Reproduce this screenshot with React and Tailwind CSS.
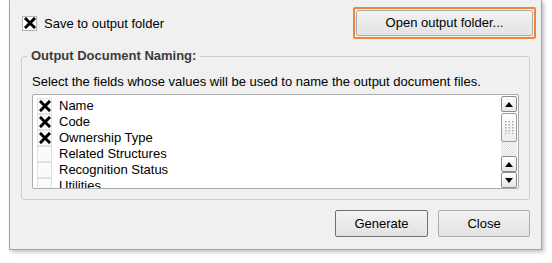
import React from "react";

const fields = [
  { name: "Name", checked: true },
  { name: "Code", checked: true },
  { name: "Ownership Type", checked: true },
  { name: "Related Structures", checked: false },
  { name: "Recognition Status", checked: false },
  { name: "Utilities", checked: false },
];

const Cross = ({ size = 12 }) => (
  <svg width={size} height={size} viewBox="0 0 12 12">
    <path d="M2 2 L10 10 M10 2 L2 10" stroke="#000" strokeWidth="3" strokeLinecap="square" />
  </svg>
);

const Arrow = ({ down }) => (
  <svg width="8" height="5" viewBox="0 0 8 5">
    <path d={down ? "M0 0 H8 L4 5 Z" : "M0 5 H8 L4 0 Z"} fill="#000" />
  </svg>
);

const ScrollBtn = ({ down }) => (
  <div className="h-[16px] flex items-center justify-center rounded-[2px] border border-[#8c8c8c] bg-gradient-to-b from-white to-[#e6e6e6]">
    <Arrow down={down} />
  </div>
);

const App = () => {
  return (
    <div className="w-[552px] h-[263px] bg-white font-['Liberation_Sans',Arial,sans-serif] text-[13px] text-black">
      {/* dialog */}
      <div className="ml-[9px] w-[533px] h-[250px] bg-[#f0f0f0] border border-t-0 border-[#a3a3a3] shadow-[2px_2px_4px_rgba(0,0,0,0.25)] flex flex-col">
        {/* top row */}
        <div className="flex items-center justify-between pl-[12px] pr-[5px] pt-[7px] h-[39px]">
          <label className="flex items-center gap-[7px]">
            <span className="w-[15px] h-[15px] border border-[#b4b4b4] bg-white flex items-center justify-center">
              <Cross />
            </span>
            <span className="leading-[15px]">Save to output folder</span>
          </label>
          <div className="w-[183px] h-[32px] border-2 border-[#f0843c] rounded-[2px] p-[1px]">
            <button className="w-full h-full rounded-[2px] border border-[#adadad] bg-gradient-to-b from-[#f3f3f3] to-[#e2e2e2] text-[13px]">
              Open output folder...
            </button>
          </div>
        </div>

        {/* group box */}
        <fieldset className="mx-[11px] mt-[9px] border border-[#cfcfcf] rounded-[3px] px-[10px] pb-[10px]">
          <legend className="ml-[-5px] px-[4px] font-bold text-[#3c3c3c] leading-[16px]">
            Output Document Naming:
          </legend>
          <p className="mt-[10px] leading-[15px]">
            Select the fields whose values will be used to name the output document files.
          </p>
          <div className="mt-[5px] h-[95px] border border-[#ababab] rounded-[2px] bg-white flex overflow-hidden">
            <div className="flex-1 pt-[3px] pl-[4px]">
              {fields.map((f) => (
                <div key={f.name} className="flex items-center h-[16px] gap-[7px]">
                  <span className="w-[15px] h-[16px] border border-[#e2e2e2] bg-[#fafafa] flex items-center justify-center">
                    {f.checked && <Cross />}
                  </span>
                  <span className="leading-[16px]">{f.name}</span>
                </div>
              ))}
            </div>
            {/* scrollbar */}
            <div className="w-[17px] pt-[1px] pr-[1px] flex flex-col">
              <ScrollBtn />
              <div className="mt-[1px] h-[29px] rounded-[2px] border border-[#9a9a9a] bg-gradient-to-b from-white to-[#ececec] flex items-center justify-center">
                <svg width="9" height="13" viewBox="0 0 9 13">
                  {[0, 1, 2, 3, 4].map((r) =>
                    [0, 1, 2].map((c) => (
                      <rect key={`${r}-${c}`} x={c * 3.5} y={r * 3} width="1.5" height="1.5" fill="#a8a8a8" />
                    ))
                  )}
                </svg>
              </div>
              <div className="h-[14px] bg-[repeating-conic-gradient(#e4e4e4_0_25%,#f6f6f6_0_50%)] bg-[length:2px_2px]" />
              <ScrollBtn />
              <ScrollBtn down />
            </div>
          </div>
        </fieldset>

        {/* buttons */}
        <div className="flex justify-end gap-[10px] mt-[10px] mr-[11px]">
          <button className="w-[93px] h-[27px] rounded-[2px] border border-[#707070] bg-gradient-to-b from-[#f3f3f3] to-[#e2e2e2] text-[13px]">
            Generate
          </button>
          <button className="w-[92px] h-[27px] rounded-[2px] border border-[#adadad] bg-gradient-to-b from-[#f3f3f3] to-[#e2e2e2] text-[13px]">
            Close
          </button>
        </div>
      </div>
    </div>
  );
};

export default App;
